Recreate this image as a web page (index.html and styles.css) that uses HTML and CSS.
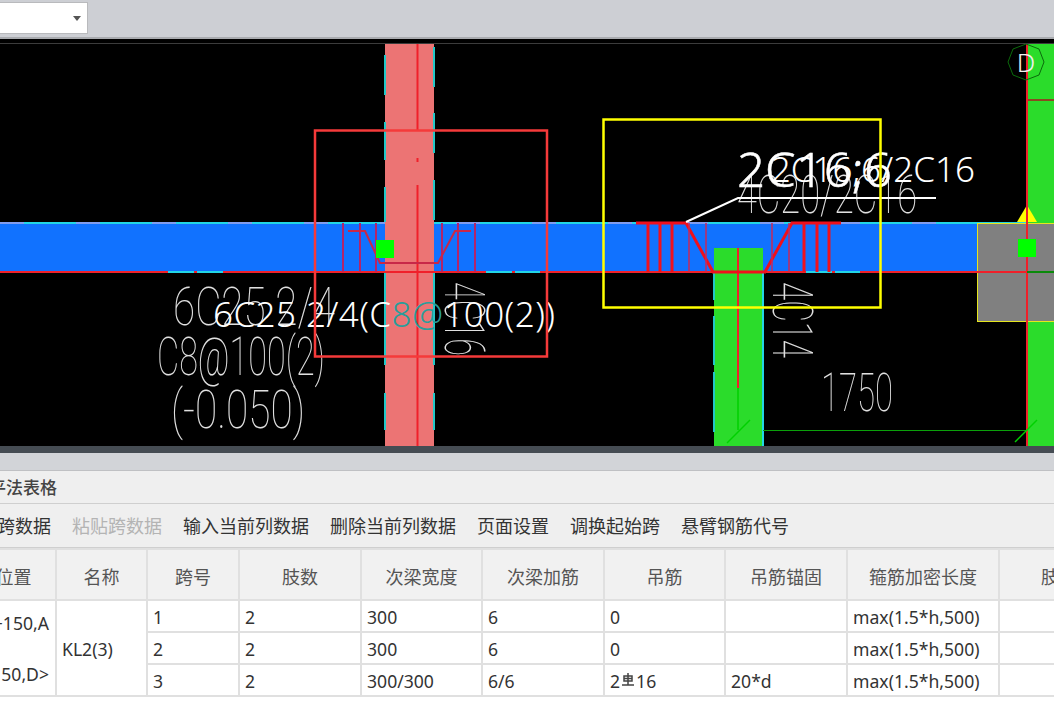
FILE: index.html
```html
<!DOCTYPE html>
<html lang="en">
<head>
  <meta charset="UTF-8">
  <title>平法表格</title>
  <link rel="stylesheet" href="styles.css">
</head>
<body>
  <div class="topbar">
    <div class="combo"><span class="combo-arrow"></span></div>
  </div>

  <svg class="canvas" viewBox="0 39 1054 407" width="1054" height="407">
    <line class="frame-line" x1="0" y1="43.5" x2="1054" y2="43.5"/>

    <!-- beam -->
    <rect class="beam" x="0" y="223" width="1054" height="49"/>
    <line class="edge-cyan" x1="0" y1="223" x2="1054" y2="223"/>
    <line class="edge-lilac" x1="0" y1="223" x2="977" y2="223"/>

    <!-- columns -->
    <rect class="col-pink" x="385" y="44" width="49" height="402"/>
    <path class="edge-dash" d="M385 55V95M385 122V160M385 187V222M385 273V365M385 393V430"/>
    <path class="edge-dash" d="M434 47V87M434 113V153M434 180V220M434 273V365M434 393V430"/>
    <rect class="col-green" x="714" y="248" width="49" height="198"/>
    <path class="edge-dash" d="M714 272V300M714 316V365M714 372V432"/>
    <line class="edge-cyan" x1="763" y1="272" x2="763" y2="446"/>
    <rect class="col-green" x="1027" y="44" width="27" height="179"/>
    <rect class="col-green" x="1027" y="322" width="27" height="124"/>
    <line class="line-brown" x1="1027" y1="100" x2="1054" y2="100"/>
    <rect class="col-grey" x="977.5" y="223.5" width="80" height="98"/>
    <polygon class="tri" points="1027,205 1037,222 1017,222"/>

    <!-- axis lines -->
    <line class="line-red" x1="0" y1="272" x2="1027" y2="272"/>
    <line class="line-cyan-dash" x1="168" y1="272" x2="224" y2="272"/>
    <line class="line-cyan-dash" x1="486" y1="272" x2="540" y2="272"/>
    <line class="line-cyan-dash" x1="806" y1="272" x2="860" y2="272"/>
    <line class="line-red" x1="417.5" y1="44" x2="417.5" y2="130"/>
    <line class="line-red" x1="417.5" y1="158" x2="417.5" y2="162"/>
    <line class="line-red" x1="417.5" y1="185" x2="417.5" y2="446"/>
    <line class="line-red" x1="738" y1="248" x2="738" y2="388"/>
    <line class="line-red" x1="1027" y1="44" x2="1027" y2="446"/>
    <line class="line-green" x1="1027" y1="272" x2="1054" y2="272"/>

    <!-- dimension -->
    <line class="line-tick" x1="738" y1="388" x2="738" y2="430"/>
    <line class="line-dim" x1="763" y1="430.5" x2="1027" y2="430.5"/>
    <line class="line-tick" x1="727" y1="443" x2="750" y2="420"/>
    <line class="line-tick" x1="1015" y1="442" x2="1037" y2="420"/>

    <!-- left hanger bar, dim -->
    <g class="bars-dim">
      <line x1="343" y1="223" x2="343" y2="272"/>
      <line x1="360" y1="223" x2="360" y2="272"/>
      <line x1="376" y1="223" x2="376" y2="272"/>
      <line x1="442" y1="223" x2="442" y2="272"/>
      <line x1="458" y1="223" x2="458" y2="272"/>
      <line x1="475" y1="223" x2="475" y2="272"/>
    </g>
    <polyline class="bar-hook" points="348,231 365,231 380,263 438,263 455,231 471,231"/>

    <!-- right hanger bar -->
    <g class="bars-thick">
      <polyline points="636,223 686,223 713,272 765,272 792,223 841,223"/>
      <line x1="648" y1="223" x2="648" y2="272"/>
      <line x1="660" y1="223" x2="660" y2="272"/>
      <line x1="672" y1="223" x2="672" y2="272"/>
      <line x1="804" y1="223" x2="804" y2="272"/>
      <line x1="817" y1="223" x2="817" y2="272"/>
      <line x1="829" y1="223" x2="829" y2="272"/>
    </g>
    <g class="bars-thin">
      <line x1="689" y1="223" x2="689" y2="272"/>
      <line x1="706" y1="223" x2="706" y2="272"/>
      <line x1="772" y1="223" x2="772" y2="272"/>
      <line x1="789" y1="223" x2="789" y2="272"/>
    </g>

    <!-- grip points -->
    <rect class="grip" x="376" y="240" width="18" height="18"/>
    <rect class="grip" x="1018" y="239" width="18" height="18"/>

    <!-- axis bubble -->
    <polygon class="bubble" points="1026,44 1039,49 1044,62 1039,75 1026,80 1013,75 1008,62 1013,49"/>
    <text class="axis-label" x="1026" y="72" text-anchor="middle">D</text>

    <!-- cad text -->
    <text class="cad" x="173" y="325" textLength="162" lengthAdjust="spacingAndGlyphs">6C25 2/4</text>
    <text class="cad" x="157" y="375" textLength="168" lengthAdjust="spacingAndGlyphs">C8@100(2)</text>
    <text class="cad" x="171" y="428" textLength="134" lengthAdjust="spacingAndGlyphs">(-0.050)</text>
    <text class="cad" x="737" y="213" textLength="180" lengthAdjust="spacingAndGlyphs">4C20/2C16</text>
    <text class="cad" x="821" y="411" textLength="72" lengthAdjust="spacingAndGlyphs">1750</text>
    <text class="cad cad-v" transform="translate(445 282) rotate(90)" textLength="74" lengthAdjust="spacingAndGlyphs">4C16</text>
    <text class="cad cad-v" transform="translate(773 282) rotate(90)" textLength="76" lengthAdjust="spacingAndGlyphs">4C14</text>

    <!-- leader -->
    <polyline class="leader" points="686,222 738,198 936,198"/>

    <!-- floating labels -->
    <text class="tag tag-mid" x="975" y="182" text-anchor="end">2C16;6/2C16</text>
    <text class="tag tag-big" x="737" y="187" textLength="155" lengthAdjust="spacingAndGlyphs">2C16;6</text>
    <text class="tag tag-mid" x="213" y="327" textLength="342" lengthAdjust="spacing">6C25 2/4(C<tspan class="tag-teal">8@</tspan>100(2))</text>

    <!-- selection boxes -->
    <rect class="box-red" x="315" y="130.5" width="232" height="226"/>
    <rect class="box-yellow" x="603.5" y="119.5" width="277" height="188"/>
  </svg>

  <div class="splitter"></div>
  <div class="tabstrip"></div>

  <div class="panel">
    <div class="panel-title">平法表格</div>

    <div class="toolbar">
      <span class="tool">复制跨数据</span>
      <span class="tool tool-off">粘贴跨数据</span>
      <span class="tool">输入当前列数据</span>
      <span class="tool">删除当前列数据</span>
      <span class="tool">页面设置</span>
      <span class="tool">调换起始跨</span>
      <span class="tool">悬臂钢筋代号</span>
    </div>

    <table class="grid">
      <colgroup>
        <col class="c-pos"><col class="c-name"><col class="c-span"><col class="c-legs">
        <col class="c-w"><col class="c-add"><col class="c-bar"><col class="c-anchor">
        <col class="c-len"><col class="c-rest">
      </colgroup>
      <thead>
        <tr>
          <th>位置</th><th>名称</th><th>跨号</th><th>肢数</th><th>次梁宽度</th>
          <th>次梁加筋</th><th>吊筋</th><th>吊筋锚固</th><th>箍筋加密长度</th><th>肢数</th>
        </tr>
      </thead>
      <tbody>
        <tr>
          <td rowspan="3" class="pos">+150,A<br><br>50,D&gt;</td>
          <td rowspan="3">KL2(3)</td>
          <td>1</td><td>2</td><td>300</td><td>6</td><td>0</td><td></td><td>max(1.5*h,500)</td><td></td>
        </tr>
        <tr>
          <td>2</td><td>2</td><td>300</td><td>6</td><td>0</td><td></td><td>max(1.5*h,500)</td><td></td>
        </tr>
        <tr>
          <td>3</td><td>2</td><td>300/300</td><td>6/6</td>
          <td>2<svg class="rebar" viewBox="0 0 14 14" width="14" height="14"><path d="M3 3h8v5H3zM3 5.5h8M7 0v12M1 12h12"/></svg>16</td>
          <td>20*d</td><td>max(1.5*h,500)</td><td></td>
        </tr>
      </tbody>
    </table>
  </div>
</body>
</html>
```

FILE: styles.css
```css
html, body {
  margin: 0;
  padding: 0;
  height: 719px;
  overflow: hidden;
  background: #fff;
}

body {
  width: 1054px;
  font-family: "Noto Sans", "Noto Sans CJK SC", sans-serif;
  color: #333;
}

.topbar {
  height: 39px;
  background: #cdcfd4;
  border-bottom: 2px solid #a9abaf;
  padding-top: 2px;
  box-sizing: border-box;
}

.combo {
  width: 88px;
  height: 32px;
  background: #fff;
  border: 1px solid #b9babd;
  border-left: none;
  box-sizing: border-box;
  display: flex;
  align-items: center;
  justify-content: flex-end;
  padding-right: 6px;
}

.combo-arrow {
  width: 0;
  height: 0;
  border-left: 4px solid transparent;
  border-right: 4px solid transparent;
  border-top: 5px solid #555;
}

.canvas {
  display: block;
  background: #000;
}

.frame-line { stroke: #3c3c3c; stroke-width: 1; }
.beam { fill: #1172ff; }
.col-pink { fill: #ec7474; }
.col-green { fill: #2bdc2b; }
.col-grey { fill: #808080; stroke: #e6e61e; stroke-width: 1; }
.tri { fill: #ffff00; }
.grip { fill: #00ff00; }
.bubble { fill: none; stroke: #0b6a0b; stroke-width: 1; }

.edge-cyan { stroke: #22d6e6; stroke-width: 2; }
.edge-lilac { stroke: #7f9cf0; stroke-width: 2; stroke-dasharray: 24 52; }
.edge-dash { stroke: #22c8c8; stroke-width: 2; fill: none; }
.line-red { stroke: #f0202a; stroke-width: 2; }
.line-green { stroke: #0a8a0a; stroke-width: 2; }
.line-brown { stroke: #8a4a20; stroke-width: 2; }
.line-cyan-dash { stroke: #22d6e6; stroke-width: 2; stroke-dasharray: 26 3; }
.line-dim { stroke: #0aa00a; stroke-width: 1; }
.line-tick { stroke: #00d000; stroke-width: 1.5; }

.bars-dim line {
  stroke: #b3246a;
  stroke-width: 2;
}
.bar-hook {
  fill: none;
  stroke: #c82848;
  stroke-width: 2;
}
.bars-thick line, .bars-thick polyline {
  fill: none;
  stroke: #f0101c;
  stroke-width: 3;
}
.bars-thin line {
  stroke: #c8285a;
  stroke-width: 1.5;
}

.leader {
  fill: none;
  stroke: #fff;
  stroke-width: 2;
}

.cad {
  font-family: "Roboto", sans-serif;
  font-weight: 100;
  font-size: 54px;
  fill: #e0e0e0;
  filter: grayscale(1);
}

.cad-v { font-size: 56px; }

.axis-label {
  font-family: "Noto Sans", sans-serif;
  font-size: 26px;
  font-weight: 300;
  fill: #f0f0f0;
}

.tag {
  font-family: "Noto Sans", sans-serif;
  fill: #fff;
}
.tag-mid { font-size: 35px; font-weight: 300; }
.tag-big {
  font-size: 48px;
  font-weight: 300;
  stroke: #fff;
  stroke-width: 0.5;
}
.tag-teal { fill: #2a9d9b; }

.box-red { fill: none; stroke: #f53a3a; stroke-width: 2.5; }
.box-yellow { fill: none; stroke: #ffff00; stroke-width: 2.5; }

.splitter {
  height: 7px;
  background: #454c53;
}

.tabstrip {
  height: 17px;
  background: #d2d4d8;
  border-bottom: 1px solid #bfc0c3;
}

.panel {
  overflow: hidden;
}

.panel-title {
  height: 32px;
  line-height: 34px;
  background: #efefef;
  border-bottom: 1px solid #cfcfcf;
  font-size: 17px;
  font-weight: 500;
  color: #444;
  margin-left: -11px;
}

.toolbar {
  height: 44px;
  box-sizing: border-box;
  padding-bottom: 2px;
  background: #efefef;
  border-bottom: 1px solid #cfcfcf;
  display: flex;
  align-items: center;
  gap: 21px;
  margin-left: -39px;
  font-size: 18px;
  color: #333;
}

.tool { flex: none; }
.tool-off { color: #b4b4b4; }

.grid {
  border-collapse: collapse;
  table-layout: fixed;
  width: 1148px;
  margin-left: -30px;
  font-size: 17.6px;
  color: #333;
}

.c-pos { width: 85px; }
.c-name { width: 91px; }
.c-span { width: 92px; }
.c-legs { width: 122px; }
.c-w { width: 121px; }
.c-add { width: 122px; }
.c-bar { width: 121px; }
.c-anchor { width: 122px; }
.c-len { width: 152px; }
.c-rest { width: 120px; }

.grid th, .grid td {
  border: 2px solid #e0e0e0;
  padding: 0 5px;
  box-sizing: border-box;
  overflow: hidden;
  white-space: nowrap;
}

.grid th {
  height: 51px;
  padding-top: 2px;
  background: #f1f1f1;
  font-size: 18px;
  font-weight: 400;
  color: #555;
}

.grid td {
  height: 32px;
  padding-top: 1px;
  background: #fff;
  line-height: 20px;
}

.grid .pos {
  text-align: right;
  padding-right: 6px;
  padding-top: 3px;
  line-height: 25.5px;
}

.rebar {
  fill: none;
  stroke: #444;
  stroke-width: 1.5;
  vertical-align: 1px;
  margin: 0 1px;
}
```
